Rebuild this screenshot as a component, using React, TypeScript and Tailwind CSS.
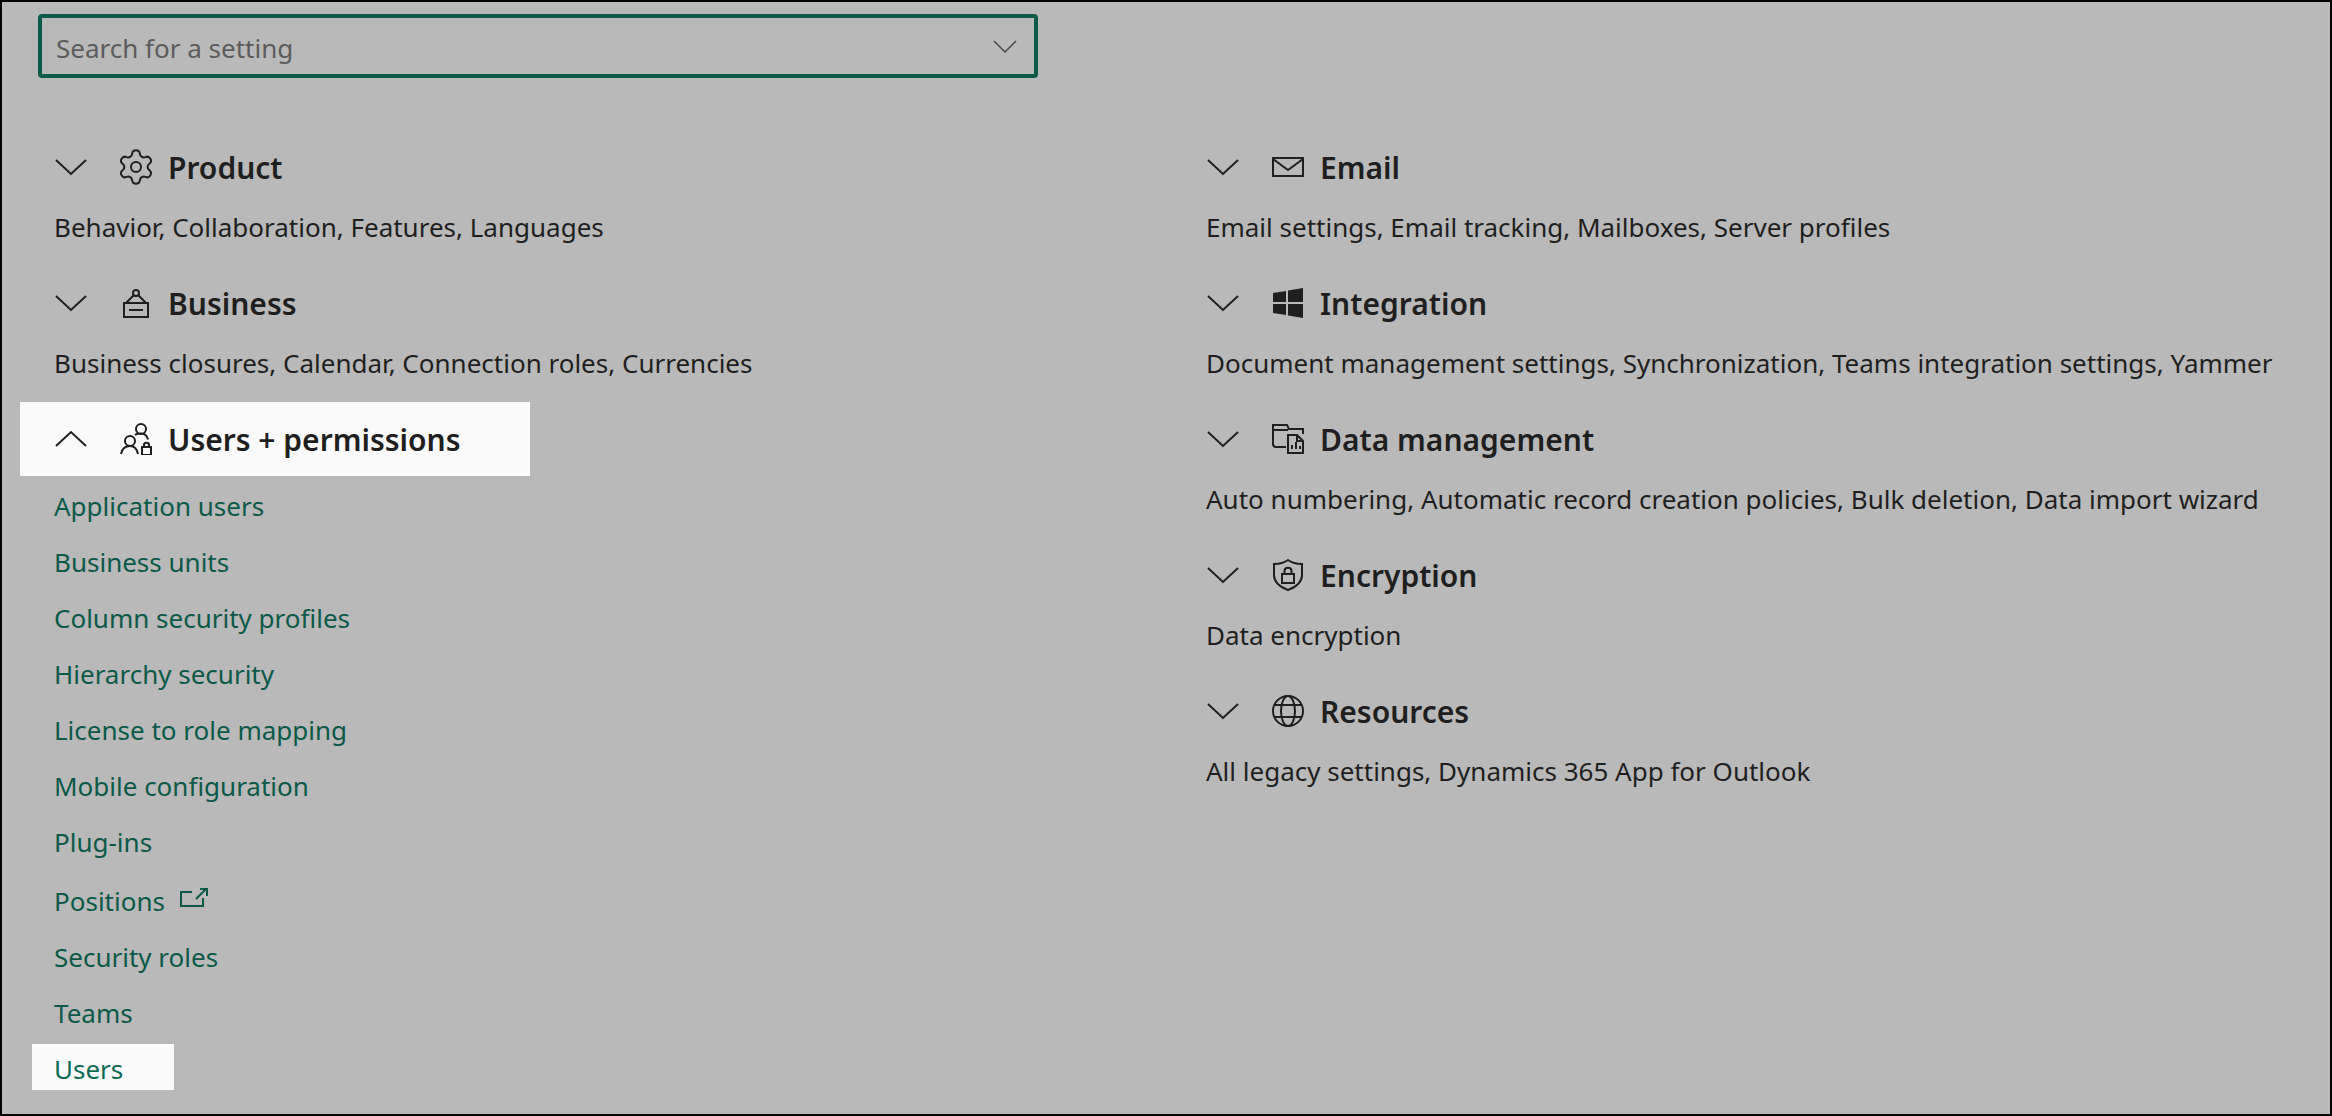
import React from 'react';
import { Settings } from 'lucide-react';

const sans = "font-['Noto_Sans',sans-serif]";

function Chevron({ up }: { up?: boolean }) {
  return (
    <svg width="34" height="18" viewBox="0 0 34 18" fill="none" stroke="#1f1f1f" strokeWidth="2" className="shrink-0">
      <path d={up ? 'M2 16 17 2l15 14' : 'M2 2l15 14L32 2'} />
    </svg>
  );
}

const iconProps = { width: 32, height: 32, viewBox: '0 0 32 32', fill: 'none', stroke: '#1f1f1f', strokeWidth: 2 };

function GearIcon() {
  return <Settings size={40} strokeWidth={1.2} color="#1f1f1f" className="-ml-[4px] shrink-0" />;
}

function BusinessIcon() {
  return (
    <svg {...iconProps}>
      <circle cx="16" cy="6" r="3" />
      <path d="M14 8 6 16M18 8l8 8M4 16h24v14H4zM9 23h14" />
    </svg>
  );
}

function UsersIcon() {
  return (
    <svg {...iconProps}>
      <circle cx="21" cy="6" r="5" />
      <circle cx="10" cy="18" r="5" />
      <path d="M15 12c1-1 3-1.500 6-1.500 4 0 6 2 7 6M1 31c1-5 4-8 9-8 4 0 7 3 8 8" />
      <path d="M22 24h9v8h-9zM24 24v-2c0-3 5-3 5 0v2" />
    </svg>
  );
}

function MailIcon() {
  return (
    <svg {...iconProps}>
      <path d="M1 7h30v18H1zM1 8l15 11L31 8" />
    </svg>
  );
}

function WindowsIcon() {
  return (
    <svg width="32" height="32" viewBox="0 0 32 32" fill="#1f1f1f">
      <path d="M1 6l13-2v11H1zM16 3.500 31 1v14H16zM1 17h13v11L1 26zM16 17h15v14l-15-2.500z" />
    </svg>
  );
}

function DataIcon() {
  return (
    <svg {...iconProps}>
      <path d="M14 24H4a3 3 0 0 1-3-3V2h14l2 4h14v5M1 7h15" />
      <path d="M16 30V12h9l6 6v12zM25 12v6h6M20 26v-4M24 26v-7M28 26v-3" />
    </svg>
  );
}

function ShieldIcon() {
  return (
    <svg {...iconProps}>
      <path d="M16 1c4 3 9 4 14 4v11c0 7-6 12-14 15C8 28 2 23 2 16V5c5 0 10-1 14-4z" />
      <path d="M10 15h12v9H10zM12.500 15v-3c0-4.500 7-4.500 7 0v3" />
    </svg>
  );
}

function GlobeIcon() {
  return (
    <svg {...iconProps}>
      <circle cx="16" cy="16" r="15" />
      <ellipse cx="16" cy="16" rx="7" ry="15" />
      <path d="M3 10h26M3 22h26" />
    </svg>
  );
}

function ExternalIcon() {
  return (
    <svg width="28" height="21" viewBox="0 0 28 21" fill="none" stroke="#0b5a48" strokeWidth="2" className="ml-[15px] mb-2">
      <path d="M12 5H1v14h22v-8M16 12 26 2M20 2h7v7" />
    </svg>
  );
}

function Section({ icon, title, text }: { icon: React.ReactNode; title: string; text: string }) {
  return (
    <div>
      <div className="flex h-[74px] items-center">
        <Chevron />
        <span className="ml-[32px] flex w-[34px] items-center">{icon}</span>
        <span className="ml-[14px] text-[30px] font-semibold text-[#1f1f1f]">{title}</span>
      </div>
      <p className="h-[62px] text-[26px] leading-[46px] whitespace-nowrap text-[#1f1f1f]">{text}</p>
    </div>
  );
}

const links = [
  'Application users',
  'Business units',
  'Column security profiles',
  'Hierarchy security',
  'License to role mapping',
  'Mobile configuration',
  'Plug-ins',
];

function LinkRow({ label, active }: { label: string; active?: boolean }) {
  return (
    <a className={`block h-[46px] w-[142px] whitespace-nowrap px-[22px] pt-[6px] text-[26px] leading-[38px] ${active ? 'bg-[#fafafa] text-[#0b6a54]' : 'text-[#0b5a48]'}`}>
      {label}
    </a>
  );
}

export default function App() {
  return (
    <div className={`h-[1116px] w-[2332px] overflow-hidden border-2 border-black bg-[#b9b9b9] ${sans}`}>
      <div className="ml-[36px] mt-[12px] flex h-[64px] w-[1000px] items-center justify-between rounded-[4px] border-4 border-[#0b5a48] pl-[14px] pr-[17px]">
        <span className="pt-[5px] text-[26px] text-[#5c5c5c]">Search for a setting</span>
        <svg width="24" height="13" viewBox="0 0 24 13" fill="none" stroke="#4a4a4a" strokeWidth="1.500">
          <path d="M1 1l11 11L23 1" />
        </svg>
      </div>

      <div className="mt-[52px] flex">
        <div className="w-[1152px]">
          <div className="pl-[52px]">
            <Section icon={<GearIcon />} title="Product" text="Behavior, Collaboration, Features, Languages" />
            <Section icon={<BusinessIcon />} title="Business" text="Business closures, Calendar, Connection roles, Currencies" />
          </div>
          <div className="ml-[18px] flex h-[74px] w-[510px] items-center bg-[#fafafa] pl-[34px]">
            <Chevron up />
            <span className="ml-[32px] flex w-[34px] items-center"><UsersIcon /></span>
            <span className="ml-[14px] text-[30px] font-semibold text-[#1f1f1f]">Users + permissions</span>
          </div>
          <div className="ml-[30px] mt-[5px] flex flex-col gap-[10px]">
            {links.map((l) => <LinkRow key={l} label={l} />)}
            <a className="flex h-[49px] items-center whitespace-nowrap px-[22px] pt-[7px] text-[26px] text-[#0b5a48]">
              Positions
              <ExternalIcon />
            </a>
            <LinkRow label="Security roles" />
            <LinkRow label="Teams" />
            <LinkRow label="Users" active />
          </div>
        </div>

        <div className="pl-[52px]">
          <Section icon={<MailIcon />} title="Email" text="Email settings, Email tracking, Mailboxes, Server profiles" />
          <Section icon={<WindowsIcon />} title="Integration" text="Document management settings, Synchronization, Teams integration settings, Yammer" />
          <Section icon={<DataIcon />} title="Data management" text="Auto numbering, Automatic record creation policies, Bulk deletion, Data import wizard" />
          <Section icon={<ShieldIcon />} title="Encryption" text="Data encryption" />
          <Section icon={<GlobeIcon />} title="Resources" text="All legacy settings, Dynamics 365 App for Outlook" />
        </div>
      </div>
    </div>
  );
}
